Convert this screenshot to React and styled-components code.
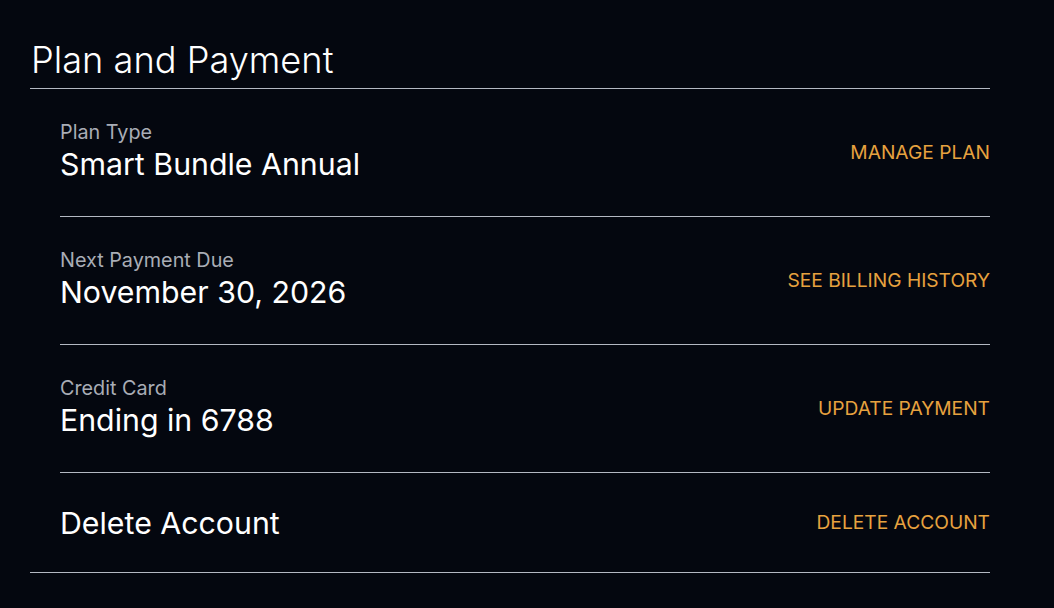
import React from 'react';
import styled, { createGlobalStyle } from 'styled-components';

const Global = createGlobalStyle`
  html, body {
    margin: 0;
    background: #04070f;
  }
  body {
    font-family: Inter, "Noto Sans", sans-serif;
    color: #fff;
  }
`;

const Page = styled.div`
  width: 1054px;
  height: 608px;
  background: #04070f;
  padding: 0 64px 0 30px;
  box-sizing: border-box;
`;

const Title = styled.h1`
  margin: 0;
  padding: 38px 0 0 1px;
  height: 50px;
  font-size: 36.2px;
  font-weight: 300;
  line-height: 44px;
  border-bottom: 1px solid #b4b8c2;
`;

const List = styled.div`
  display: flex;
  flex-direction: column;
  border-bottom: 1px solid #b4b8c2;
`;

const Row = styled.div`
  display: flex;
  align-items: center;
  justify-content: space-between;
  margin-left: 30px;
  height: ${p => (p.$short ? '99px' : '127px')};
  border-bottom: ${p => (p.$last ? 'none' : '1px solid #b4b8c2')};
`;

const Info = styled.div`
  display: flex;
  flex-direction: column;
  margin-top: -2px;
`;

const Label = styled.span`
  font-size: 19.8px;
  line-height: 22px;
  color: #a9adb6;
`;

const Value = styled.span`
  font-size: 30.3px;
  line-height: 38px;
  color: #fff;

  ${Label} + & {
    margin-top: 2px;
  }
`;

const Action = styled.a`
  font-size: 19.2px;
  margin-top: -2px;
  color: #e7a23f;
  text-transform: uppercase;
  cursor: pointer;
`;

const rows = [
  { label: 'Plan Type', value: 'Smart Bundle Annual', action: 'Manage Plan' },
  { label: 'Next Payment Due', value: 'November 30, 2026', action: 'See Billing History' },
  { label: 'Credit Card', value: 'Ending in 6788', action: 'Update Payment' },
];

export default function App() {
  return (
    <Page>
      <Global />
      <Title>Plan and Payment</Title>
      <List>
        {rows.map(r => (
          <Row key={r.label}>
            <Info>
              <Label>{r.label}</Label>
              <Value>{r.value}</Value>
            </Info>
            <Action>{r.action}</Action>
          </Row>
        ))}
        <Row $short $last>
          <Value>Delete Account</Value>
          <Action>Delete Account</Action>
        </Row>
      </List>
    </Page>
  );
}
